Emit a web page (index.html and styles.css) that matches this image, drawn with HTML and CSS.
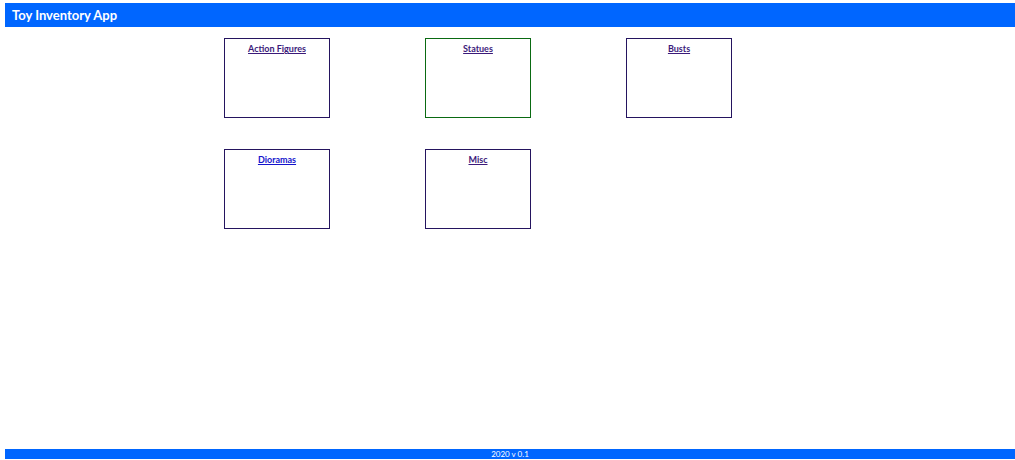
FILE: index.html
```html
<!DOCTYPE html>
<html>
<head>
<meta charset="utf-8">
<link rel="stylesheet" href="styles.css">
</head>
<body>
<div class="page">
  <header class="topbar">Toy Inventory App</header>
  <main class="grid">
    <div class="card"><a class="card-link visited" href="#">Action Figures</a></div>
    <div class="card card-green"><a class="card-link visited" href="#">Statues</a></div>
    <div class="card"><a class="card-link visited" href="#">Busts</a></div>
    <div class="card"><a class="card-link fresh" href="#">Dioramas</a></div>
    <div class="card"><a class="card-link visited" href="#">Misc</a></div>
  </main>
  <footer class="footer">2020 v 0.1</footer>
</div>
</body>
</html>
```
FILE: styles.css
```css
html, body {
  margin: 0;
  padding: 0;
  background: #ffffff;
}
body {
  font-family: "Lato", "Open Sans", sans-serif;
}
.page {
  height: 460px;
  box-sizing: border-box;
  padding: 3px 0 1px 5px;
  display: flex;
  flex-direction: column;
}
.topbar {
  height: 24px;
  background: #0066ff;
  color: #ffffff;
  font-weight: 700;
  font-size: 13px;
  line-height: 24px;
  padding-left: 7px;
}
.grid {
  margin: 11px 0 0 219px;
  display: grid;
  grid-template-columns: repeat(3, 106px);
  grid-auto-rows: 80px;
  column-gap: 95px;
  row-gap: 31px;
}
.card {
  box-sizing: border-box;
  border: 1px solid #24145f;
  text-align: center;
  padding-top: 4px;
  font-size: 9px;
  line-height: 11px;
}
.card-green {
  border-color: #0a6a12;
}
.card-link {
  font-size: 9px;
  font-weight: 700;
  text-decoration: underline;
}
.visited { color: #3b1a7a; }
.fresh { color: #1414cc; }
.footer {
  margin-top: auto;
  height: 10px;
  background: #0066ff;
  color: #ffffff;
  font-size: 8px;
  line-height: 10px;
  text-align: center;
}
```
